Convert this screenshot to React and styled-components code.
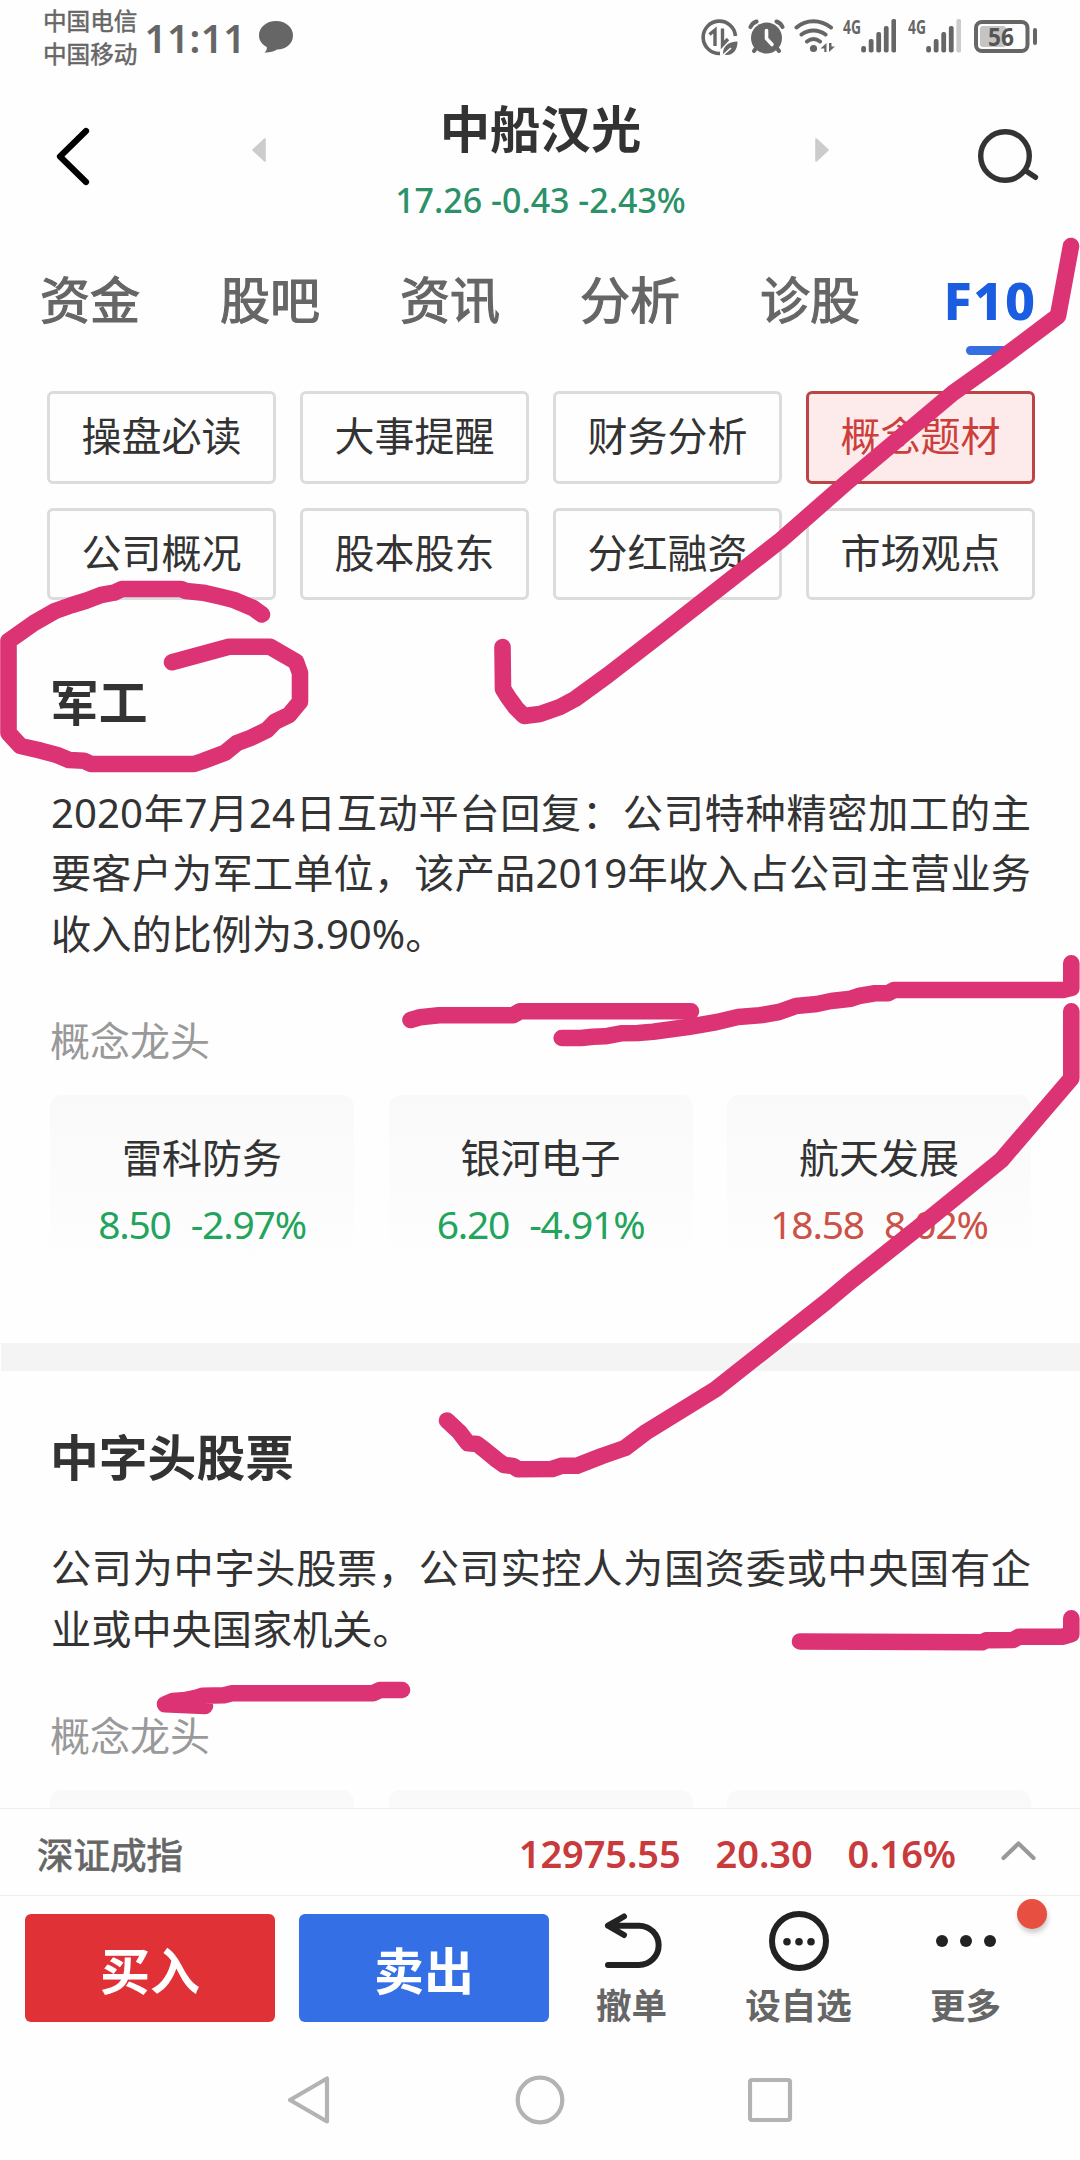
import React from "react";
import styled, { createGlobalStyle } from "styled-components";

const GlobalStyle = createGlobalStyle`
    * {
        box-sizing: border-box;
    }
    body {
        margin: 0;
        background: #fefefe;
        font-family: "Noto Sans", "Noto Sans CJK SC", sans-serif;
        color: #333;
    }
`
const Screen = styled.div`
    position: relative;
    width: 1080px;
    height: 2160px;
    display: flex;
    flex-direction: column;
    overflow: hidden;
    background: #fefefe;
`

/* status bar */
const StatusBar = styled.div`
    height: 76px;
    flex: none;
    display: flex;
    align-items: center;
    padding: 0 43px;
    color: #666;
`
const Carriers = styled.div`
    font-size: 23.6px;
    line-height: 33px;
    -webkit-text-stroke: 0.5px #666;
`
const Clock = styled.div`
    margin-left: 7px;
    width: 114px;
    font-size: 39px;
    font-weight: 600;
    line-height: 50px;
    letter-spacing: 0.3px;
`
const StatusIcons = styled.div`
    display: flex;
    align-items: center;
    margin-left: auto;
`
const StatusIcon = styled.svg`
    display: block;
    flex: none;
    margin-left: ${p => p.$gap || 0}px;
`

/* header */
const Header = styled.div`
    height: 160px;
    flex: none;
    display: flex;
    align-items: center;
    padding: 0 41px 0 55px;
`
const Arrow = styled.svg`
    display: block;
    margin: 0 ${p => p.$right || 0}px 12px ${p => p.$left || 0}px;
`
const TitleBlock = styled.div`
    flex: 1;
    text-align: center;
`
const StockName = styled.div`
    font-size: 50.4px;
    font-weight: 700;
    line-height: 60px;
    padding-top: 8px;
`
const StockQuote = styled.div`
    margin-top: 19px;
    font-size: 34px;
    font-weight: 500;
    line-height: 44px;
    color: #2a9168;
`

/* tabs */
const Tabs = styled.div`
    display: grid;
    grid-template-columns: repeat(6, 180px);
    padding-top: 34px;
    height: 119px;
    flex: none;
`
const Tab = styled.div`
    display: flex;
    flex-direction: column;
    align-items: center;
    font-size: ${p => (p.$active ? 52 : 50)}px;
    line-height: 60px;
    font-weight: ${p => (p.$active ? 800 : 400)};
    letter-spacing: ${p => (p.$active ? 1.5 : 0)}px;
    color: ${p => (p.$active ? "#1b5de0" : "#666")};
    -webkit-text-stroke: ${p => (p.$active ? 0 : "1.2px #666")};
    &::after {
        content: "";
        width: 48px;
        height: 9px;
        margin-top: 16px;
        border-radius: 5px;
        background: ${p => (p.$active ? "#346ee0" : "transparent")};
    }
`

/* page body */
const Content = styled.div`
    flex: 1;
    min-height: 0;
    overflow: hidden;
`
const MenuGrid = styled.div`
    display: grid;
    grid-template-columns: repeat(4, 229px);
    grid-auto-rows: 92.5px;
    gap: 24px;
    padding: 36px 0 16px 47px;
`
const MenuButton = styled.div`
    display: flex;
    align-items: center;
    justify-content: center;
    padding-bottom: 6px;
    font-size: 40px;
    border: 3px solid ${p => (p.$active ? "#bb4444" : "#dcdcdc")};
    border-radius: 6px;
    background: ${p => (p.$active ? "#fdeaea" : "#fefefe")};
    color: ${p => (p.$active ? "#cb3e3b" : "#333")};
`
const Section = styled.div`
    padding: 56px 49px 76px 50px;
`
const SectionTitle = styled.div`
    font-size: 48.8px;
    font-weight: 700;
    line-height: 60px;
`
const Paragraph = styled.div`
    margin: 51px 0 47px 1px;
    font-size: 40.2px;
    line-height: 60.4px;
    text-align: justify;
`
const LeaderLabel = styled.div`
    font-size: 40px;
    line-height: 60px;
    color: #999;
    margin-bottom: 24px;
`
const Leaders = styled.div`
    display: grid;
    grid-template-columns: repeat(3, 304px);
    justify-content: space-between;
`
const LeaderCard = styled.div`
    height: 172px;
    padding-top: 33px;
    text-align: center;
    border-radius: 12px;
    background: linear-gradient(#f9f9f9, #fefefe);
`
const LeaderName = styled.div`
    font-size: 40px;
    line-height: 60px;
`
const LeaderQuote = styled.div`
    display: flex;
    justify-content: center;
    gap: 20px;
    margin-top: 6px;
    font-size: 39px;
    line-height: 60px;
    letter-spacing: -1.2px;
    color: ${p => (p.$up ? "#cc5147" : "#22a45c")};
`
const Divider = styled.div`
    height: 28px;
    margin-left: 1px;
    background: #f4f4f4;
`

/* bottom bars */
const IndexBar = styled.div`
    height: 88px;
    flex: none;
    display: flex;
    align-items: center;
    padding: 2px 44px 0 37px;
    border-top: 1px solid #eee;
    border-bottom: 1px solid #eee;
    background: #fefefe;
    font-size: 36.5px;
    color: #666;
`
const IndexName = styled.div`
    -webkit-text-stroke: 0.8px #666;
`
const IndexNumbers = styled.div`
    display: flex;
    gap: 35px;
    margin: 0 45px 0 auto;
    font-size: 38px;
    font-weight: 600;
    letter-spacing: -0.1px;
    color: #c83a3c;
`
const ActionBar = styled.div`
    height: 144px;
    flex: none;
    display: flex;
    padding: 18px 0 0 25px;
    background: #fefefe;
`
const TradeButton = styled.div`
    width: 250px;
    height: 108px;
    margin-right: 24px;
    display: flex;
    align-items: center;
    justify-content: center;
    border-radius: 6px;
    font-size: 50px;
    font-weight: 700;
    color: #fff;
    background: ${p => (p.$buy ? "#e03137" : "#346fe6")};
`
const Tool = styled.div`
    position: relative;
    width: 167px;
    margin-left: ${p => p.$offset || 0}px;
    display: flex;
    flex-direction: column;
    align-items: center;
    font-size: 35.5px;
    font-weight: 700;
    line-height: 50px;
    color: #666;
    svg {
        display: block;
        margin: -7px 0 5px;
        overflow: visible;
    }
`
const Badge = styled.div`
    position: absolute;
    top: -15px;
    right: 2px;
    width: 30px;
    height: 30px;
    border-radius: 50%;
    background: #e74f40;
    box-shadow: 1px 4px 5px rgba(0, 0, 0, 0.2);
`
const SystemNav = styled.div`
    height: 120px;
    flex: none;
    display: flex;
    align-items: center;
    justify-content: center;
    gap: 183px;
    background: #fefefe;
`
const InkLayer = styled.svg`
    position: absolute;
    top: 0;
    left: 0;
    pointer-events: none;
`

const tabs = ["资金", "股吧", "资讯", "分析", "诊股", "F10"]
const menu = ["操盘必读", "大事提醒", "财务分析", "概念题材", "公司概况", "股本股东", "分红融资", "市场观点"]
const sections = [
    {
        title: "军工",
        text: "2020年7月24日互动平台回复：公司特种精密加工的主要客户为军工单位，该产品2019年收入占公司主营业务收入的比例为3.90%。",
        leaders: [
            { name: "雷科防务", price: "8.50", change: "-2.97%" },
            { name: "银河电子", price: "6.20", change: "-4.91%" },
            { name: "航天发展", price: "18.58", change: "8.02%", up: true },
        ],
    },
    {
        title: "中字头股票",
        text: "公司为中字头股票，公司实控人为国资委或中央国有企业或中央国家机关。",
        leaders: [{}, {}, {}],
    },
]

// pen marks, in screen coordinates
const ink = [
    "1071,246 1058,316 998,361 953,393 846,483 781,540 661,634 608,675 575,699 560,707 540,714 524,716 516,708 508,697 503,689 502.5,647",
    "262,614.5 253,608 234,600 220,596.5 203,592.7 186,591 181,589 122,589 114,592.7 101,595 86,600.7 72,605 55,611 34,623 17,635 8.5,641 8.5,733 20.5,746 41,750.7 57,755 69,760 84,760.7 91,764 194,764 203,761 225,752.7 237,743 251,737.7 267,730 275,721.7 289,715 300,701.7 300,673 296,661.7 286,656 270,646.7 229,646.7 172,662.3",
    "410.5,1020 420,1017.3 439,1015.3 513,1015.3 520,1011.3 691,1011.3",
    "561.7,1038 581,1038 593,1036.7 605,1036.3 621,1033.3 638,1033 653,1031.7 688,1027 717,1022 738,1017 760,1015.3 779,1012 796,1006 817,1004 831,1001 851,998.7 860,995.7 875,993.3 888,993.3 894,990 1063,990 1071.3,988 1071.3,963.3",
    "1071.3,1011.3 1071.3,1078.3 1001.4,1160 924,1223 851,1281 826,1302 715.6,1389.3 646.7,1431.7 625,1448 602,1456 577,1465.7 562,1465.7 552,1469 518,1469.3 513,1466 504,1465 497,1460 484,1449.3 477,1444 468,1443.3 459,1431.7 447,1420.5",
    "205,1706 165,1704.3 173,1701 186,1700 196,1698 203,1695.7 224,1695.3 232,1693.3 373,1693.3 380,1690 402,1690",
    "800,1641.5 982,1642.3 986,1640.3 1013,1640 1019,1636.7 1063,1636.7 1071.3,1634 1071.3,1618.3",
]

function Signal({ gap, weak }){
    const tops = [46, 39, 32, 26, 19]
    return(
        <StatusIcon $gap={gap} width="53" height="76" viewBox="0 0 53 76" fill="#666">
            <text x="0" y="34" fontSize="20" fontWeight="700" textLength="18" lengthAdjust="spacingAndGlyphs">4G</text>
            {tops.map((top, i) => (
                <rect
                    key={top}
                    x={18.2 + i * 7.55}
                    y={top}
                    width="4.8"
                    height={52.5 - top}
                    rx="2"
                    fill={weak && i === 4 ? "#ccc" : "#666"}
                />
            ))}
        </StatusIcon>
    )
}

export default function App(){
    return(
        <Screen>
            <GlobalStyle/>
            <StatusBar>
                <Carriers>
                    <div>中国电信</div>
                    <div>中国移动</div>
                </Carriers>
                <Clock>11:11</Clock>
                <StatusIcon width="36" height="76" viewBox="258 0 36 76" fill="#666">
                    <path d="M276 21c9.6 0 17 6.300 17 14.500S286 49.500 277 49.500c-4 2.500-8 3.200-12.500 3 2-1.800 2.600-3.500 2.300-5.500-5-2.500-7.800-6.800-7.800-11.500C259 27.300 266.400 21 276 21z"/>
                </StatusIcon>
                <StatusIcons>
                    <StatusIcon width="37" height="76" viewBox="701 0 37 76" fill="none" stroke="#666">
                        <path d="M720 53.500A16.200 16.200 0 1 1 735.500 36" strokeWidth="3.600"/>
                        <path d="M709.500 34.500l5.500-4.500V46M722.500 28.500V45l5.500-6" strokeWidth="3.400"/>
                        <path d="M723 54c0-8 5-12 14.500-12.500 0 8-4 13.500-10.500 13.500-1.500 0-2.500-.3-3-.8z" fill="#666" stroke="none"/>
                        <path d="M722 56l9-8" stroke="#fefefe" strokeWidth="1.600"/>
                    </StatusIcon>
                    <StatusIcon $gap={10} width="38" height="76" viewBox="748 0 38 76" fill="none" stroke="#666">
                        <circle cx="766.500" cy="38" r="15.500" fill="#666" stroke="none"/>
                        <path d="M750.500 27c1-2.500 3-4.500 6-5.500M782.500 27c-1-2.500-3-4.500-6-5.500M754 51l3-4M779 51l-3-4" strokeWidth="4" strokeLinecap="round"/>
                        <path d="M766.500 30.500v8l5.500 6" stroke="#fefefe" strokeWidth="3.600" strokeLinecap="round" strokeLinejoin="round"/>
                    </StatusIcon>
                    <StatusIcon $gap={8} width="42" height="76" viewBox="794 0 42 76" fill="none" stroke="#666">
                        <path d="M796.500 27.500c9.500-8.500 24-8.500 34.500 0M801.500 34.500c7-5.500 17-5.500 24 0M807 41.500c4-3 9-3 13 0" strokeWidth="4" strokeLinecap="round"/>
                        <circle cx="813.500" cy="48.500" r="3.600" fill="#666" stroke="none"/>
                        <path d="M820.500 48.500l6-5.500v9h-2.200v-3.500zM829 43v9l6-5.500h-3.500V43z" fill="#666" stroke="none"/>
                    </StatusIcon>
                    <Signal gap={7}/>
                    <Signal gap={12} weak/>
                    <StatusIcon $gap={13} width="63" height="76" viewBox="974 0 63 76">
                        <rect x="976" y="22" width="51.500" height="29" rx="6" fill="none" stroke="#666" strokeWidth="4"/>
                        <rect x="980" y="26" width="26" height="21" rx="3" fill="#c4c4c4"/>
                        <rect x="1033" y="28" width="4" height="17" rx="2" fill="#666"/>
                        <text x="988" y="46" fontSize="25" fontWeight="700" textLength="26" fill="#555" lengthAdjust="spacingAndGlyphs">56</text>
                    </StatusIcon>
                </StatusIcons>
            </StatusBar>

            <Header>
                <svg width="36" height="60" viewBox="55 126 36 60">
                    <path d="M86 131L60 156.500 86 182" fill="none" stroke="#000" strokeWidth="6.200" strokeLinecap="round" strokeLinejoin="round"/>
                </svg>
                <Arrow $left={161} width="14" height="24" viewBox="0 0 14 24">
                    <path d="M12.800 1.200v21.600L1.200 12z" fill="#ccc" stroke="#ccc" strokeWidth="2" strokeLinejoin="round"/>
                </Arrow>
                <TitleBlock>
                    <StockName>中船汉光</StockName>
                    <StockQuote>17.26 -0.43 -2.43%</StockQuote>
                </TitleBlock>
                <Arrow $right={148} width="14" height="24" viewBox="0 0 14 24">
                    <path d="M1.200 1.200v21.600L12.800 12z" fill="#ccc" stroke="#ccc" strokeWidth="2" strokeLinejoin="round"/>
                </Arrow>
                <svg width="62" height="60" viewBox="977 126 62 60" fill="none" stroke="#333" strokeWidth="5.400" strokeLinecap="round">
                    <circle cx="1005" cy="156" r="24.300"/>
                    <path d="M1026 171l9.500 6.300"/>
                </svg>
            </Header>

            <Tabs>
                {tabs.map(name => (
                    <Tab key={name} $active={name === "F10"}>{name}</Tab>
                ))}
            </Tabs>

            <Content>
                <MenuGrid>
                    {menu.map(name => (
                        <MenuButton key={name} $active={name === "概念题材"}>{name}</MenuButton>
                    ))}
                </MenuGrid>
                {sections.map((section, i) => (
                    <React.Fragment key={section.title}>
                        {i > 0 && <Divider/>}
                        <Section>
                            <SectionTitle>{section.title}</SectionTitle>
                            <Paragraph>{section.text}</Paragraph>
                            <LeaderLabel>概念龙头</LeaderLabel>
                            <Leaders>
                                {section.leaders.map((item, n) => (
                                    <LeaderCard key={n}>
                                        <LeaderName>{item.name}</LeaderName>
                                        <LeaderQuote $up={item.up}>
                                            <span>{item.price}</span>
                                            <span>{item.change}</span>
                                        </LeaderQuote>
                                    </LeaderCard>
                                ))}
                            </Leaders>
                        </Section>
                    </React.Fragment>
                ))}
            </Content>

            <IndexBar>
                <IndexName>深证成指</IndexName>
                <IndexNumbers>
                    <span>12975.55</span>
                    <span>20.30</span>
                    <span>0.16%</span>
                </IndexNumbers>
                <svg width="35" height="24" viewBox="0 0 35 24">
                    <path d="M2.500 17L17.500 2.500 32.500 17" fill="none" stroke="#999" strokeWidth="4.200" strokeLinecap="round" strokeLinejoin="round"/>
                </svg>
            </IndexBar>

            <ActionBar>
                <TradeButton $buy>买入</TradeButton>
                <TradeButton>卖出</TradeButton>
                <Tool $offset={-25}>
                    <svg width="60" height="68" viewBox="602 1907 60 68" fill="none" stroke="#222" strokeWidth="6" strokeLinecap="round" strokeLinejoin="round">
                        <path d="M624 1916.500L608 1925.700l16 9.300M608 1925.700H639a19.600 19.600 0 0 1 0 39.300H608"/>
                    </svg>
                    撤单
                </Tool>
                <Tool>
                    <svg width="60" height="68" viewBox="0 0 60 68">
                        <circle cx="30" cy="34" r="27" fill="none" stroke="#222" strokeWidth="6"/>
                        <g fill="#222">
                            <circle cx="18" cy="34.700" r="3.800"/>
                            <circle cx="30" cy="34.700" r="3.800"/>
                            <circle cx="42" cy="34.700" r="3.800"/>
                        </g>
                    </svg>
                    设自选
                </Tool>
                <Tool>
                    <svg width="60" height="68" viewBox="0 0 60 68" fill="#222">
                        <circle cx="6" cy="34" r="6"/>
                        <circle cx="30" cy="34" r="6"/>
                        <circle cx="54" cy="34" r="6"/>
                    </svg>
                    更多
                    <Badge/>
                </Tool>
            </ActionBar>

            <SystemNav>
                <svg width="46" height="52" viewBox="0 0 46 52">
                    <path d="M41 4.500v43L4 26z" fill="none" stroke="#b3b3b3" strokeWidth="4.200" strokeLinejoin="round"/>
                </svg>
                <svg width="50" height="50" viewBox="0 0 50 50">
                    <circle cx="25" cy="25" r="22.300" fill="none" stroke="#b3b3b3" strokeWidth="4.200"/>
                </svg>
                <svg width="46" height="46" viewBox="2 0 46 46">
                    <rect x="4" y="3" width="40" height="40" rx="2" fill="none" stroke="#b3b3b3" strokeWidth="4.200"/>
                </svg>
            </SystemNav>

            <InkLayer width="1080" height="2160" fill="none" stroke="#db3374" strokeWidth="16.600" strokeLinecap="round" strokeLinejoin="round">
                {ink.map(points => (
                    <polyline key={points} points={points}/>
                ))}
            </InkLayer>
        </Screen>
    )
}
